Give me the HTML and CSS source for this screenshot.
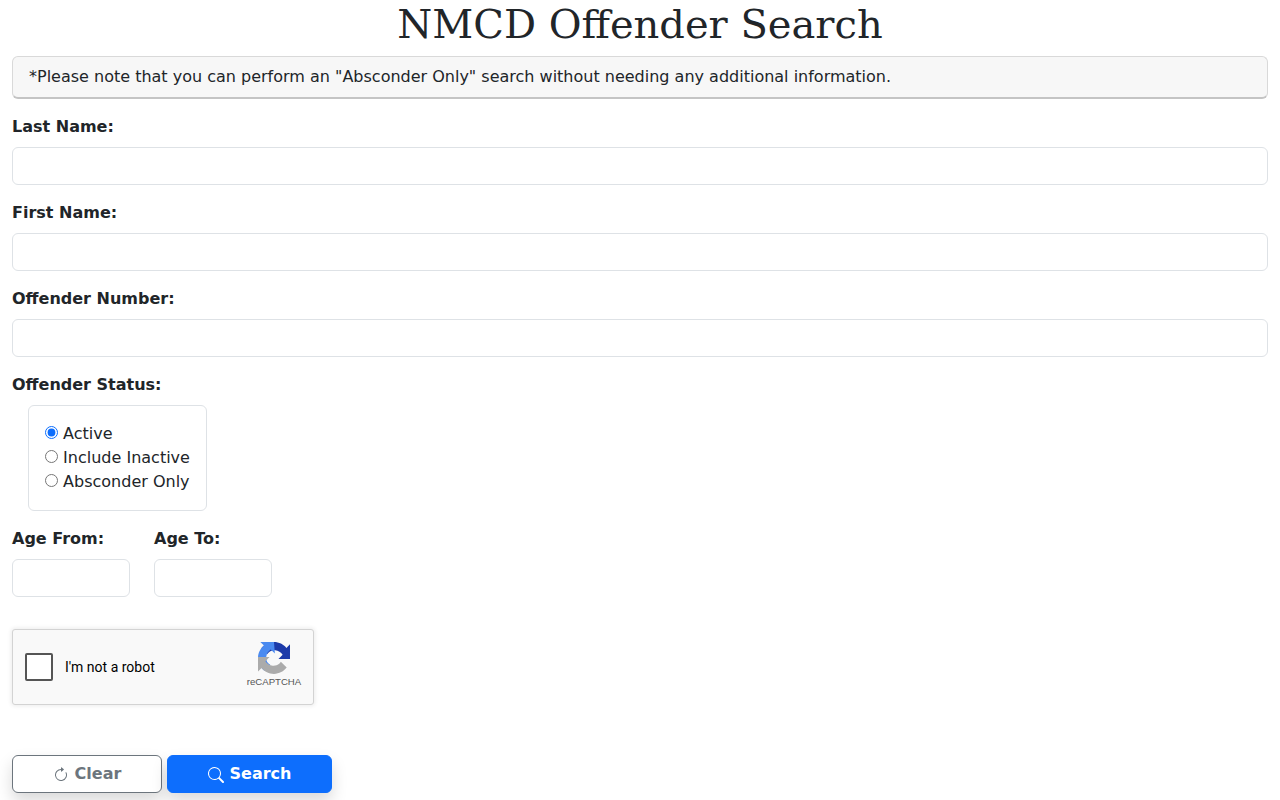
FILE: index.html
```html
<!DOCTYPE html>
<html lang="en">
<head>
    <meta charset="UTF-8">
    <meta name="viewport" content="width=device-width, initial-scale=1.0">
    <title>NMCD Offender Search</title>
    <link rel="stylesheet" href="styles.css">
</head>
<body>
    <main class="page">
        <h1 class="page-title">NMCD Offender Search</h1>
        <div class="note">*Please note that you can perform an "Absconder Only" search without needing any additional information.</div>

        <form class="search-form">
            <div class="field">
                <label class="field-label" for="lastName">Last Name:</label>
                <input class="text-input" id="lastName" type="text">
            </div>
            <div class="field">
                <label class="field-label" for="firstName">First Name:</label>
                <input class="text-input" id="firstName" type="text">
            </div>
            <div class="field">
                <label class="field-label" for="offenderNumber">Offender Number:</label>
                <input class="text-input" id="offenderNumber" type="text">
            </div>

            <div class="field">
                <span class="field-label">Offender Status:</span>
                <div class="status-box">
                    <label class="radio-row"><input type="radio" name="status" checked> Active</label>
                    <label class="radio-row"><input type="radio" name="status"> Include Inactive</label>
                    <label class="radio-row"><input type="radio" name="status"> Absconder Only</label>
                </div>
            </div>

            <div class="age-row">
                <div class="age-field">
                    <label class="field-label" for="ageFrom">Age From:</label>
                    <input class="text-input" id="ageFrom" type="text">
                </div>
                <div class="age-field">
                    <label class="field-label" for="ageTo">Age To:</label>
                    <input class="text-input" id="ageTo" type="text">
                </div>
            </div>

            <!-- Captcha -->
            <div class="captcha">
                <span class="captcha-check"></span>
                <span class="captcha-text">I'm not a robot</span>
                <div class="captcha-brand">
                    <svg class="captcha-logo" viewBox="0 0 64 64" aria-hidden="true">
                        <path fill="#1c3aa9" d="M64 31.955l-.033-1.37V4.687l-7.16 7.16C50.948 4.674 42.033.093 32.05.093c-10.4 0-19.622 4.96-25.458 12.64l11.736 11.86a15.55 15.55 0 0 1 4.754-5.334c2.05-1.6 4.952-2.906 9.968-2.906.606 0 1.074.07 1.417.2 6.216.49 11.604 3.92 14.777 8.897l-8.308 8.308 32.06.003"/>
                        <path fill="#4a8af0" d="M31.955 0l-1.37.033H4.687l7.16 7.16C4.674 13.052.093 21.967.093 31.95c0 10.4 4.96 19.622 12.64 25.458l11.86-11.736a15.55 15.55 0 0 1-5.334-4.754c-1.6-2.05-2.906-4.952-2.906-9.968 0-.606.07-1.074.2-1.417.49-6.216 3.92-11.604 8.897-14.777l8.308 8.308L31.958 0"/>
                        <path fill="#ababab" d="M0 31.955l.033 1.37v25.898l7.16-7.16c5.86 7.173 14.774 11.754 24.757 11.754 10.4 0 19.622-4.96 25.458-12.64l-11.736-11.86a15.55 15.55 0 0 1-4.754 5.334c-2.05 1.6-4.952 2.906-9.968 2.906-.606 0-1.074-.07-1.417-.2-6.216-.49-11.604-3.92-14.777-8.897l8.308-8.308-32.06.003"/>
                    </svg>
                    <span class="captcha-name">reCAPTCHA</span>
                </div>
            </div>

            <div class="actions">
                <button class="btn btn-clear" type="button">
                    <svg class="btn-icon" viewBox="0 0 16 16" fill="currentColor" aria-hidden="true">
                        <path fill-rule="evenodd" d="M8 3a5 5 0 1 0 4.546 2.914.5.5 0 0 1 .908-.417A6 6 0 1 1 8 2v1z"/>
                        <path d="M8 4.466V.534a.25.25 0 0 1 .41-.192l2.36 1.966c.12.1.12.284 0 .384L8.41 4.658A.25.25 0 0 1 8 4.466z"/>
                    </svg>
                    Clear
                </button>
                <button class="btn btn-search" type="button">
                    <svg class="btn-icon" viewBox="0 0 16 16" fill="currentColor" aria-hidden="true">
                        <path d="M11.742 10.344a6.5 6.5 0 1 0-1.397 1.398h-.001c.03.04.062.078.098.115l3.85 3.85a1 1 0 0 0 1.415-1.414l-3.85-3.85a1.007 1.007 0 0 0-.115-.1zM12 6.5a5.5 5.5 0 1 1-11 0 5.5 5.5 0 0 1 11 0z"/>
                    </svg>
                    Search
                </button>
            </div>
        </form>
    </main>
</body>
</html>
```

FILE: styles.css
```css
* {
    margin: 0;
    padding: 0;
    box-sizing: border-box;
}

body {
    font-family: "DejaVu Sans", sans-serif;
    font-size: 16px;
    line-height: 24px;
    color: #212529;
    background: #ffffff;
}

.page {
    min-height: 800px;
    padding: 0 12px;
}

.page-title {
    font-family: "DejaVu Serif", serif;
    font-size: 40px;
    font-weight: 400;
    line-height: 48px;
    text-align: center;
    margin-bottom: 8px;
}

.note {
    height: 43px;
    padding: 8px 16px;
    background: #f7f7f7;
    border: 1px solid #d9d9d9;
    border-bottom: 2px solid #c4c4c4;
    border-radius: 6px;
}

/* Form */
.search-form {
    padding-top: 16px;
}

.field {
    margin-bottom: 16px;
}

.field-label {
    display: block;
    font-weight: 700;
    margin-bottom: 8px;
}

.text-input {
    display: block;
    width: 100%;
    height: 38px;
    padding: 6px 12px;
    font: inherit;
    color: #212529;
    background: #ffffff;
    border: 1px solid #dee2e6;
    border-radius: 6px;
}

.status-box {
    width: 179px;
    height: 106px;
    margin-left: 16px;
    padding: 16px;
    border: 1px solid #dee2e6;
    border-radius: 6px;
}

.radio-row {
    display: block;
    white-space: nowrap;
}

.radio-row input {
    width: 13px;
    height: 13px;
    accent-color: #0d6efd;
}

.age-row {
    display: flex;
    gap: 24px;
    margin-top: 15px;
}

.age-field {
    width: 118px;
}

/* Captcha */
.captcha {
    display: flex;
    align-items: center;
    width: 302px;
    height: 76px;
    margin-top: 32px;
    padding-left: 12px;
    background: #f9f9f9;
    border: 1px solid #d3d3d3;
    border-radius: 3px;
    box-shadow: 0 0 4px 1px rgba(0, 0, 0, 0.08);
}

.captcha-check {
    width: 28px;
    height: 28px;
    background: #ffffff;
    border: 2px solid #555555;
    border-radius: 2px;
}

.captcha-text {
    margin-left: 12px;
    font-family: Roboto, sans-serif;
    font-size: 14px;
    color: #000000;
}

.captcha-brand {
    display: flex;
    flex-direction: column;
    align-items: center;
    width: 56px;
    margin-left: auto;
    margin-right: 11px;
    margin-bottom: 3px;
}

.captcha-logo {
    width: 32px;
    height: 32px;
}

.captcha-name {
    font-family: "Liberation Sans", sans-serif;
    font-size: 9.6px;
    line-height: 16px;
    color: #555555;
}

/* Buttons */
.actions {
    display: flex;
    gap: 5px;
    margin-top: 50px;
}

.btn {
    display: flex;
    align-items: center;
    justify-content: center;
    gap: 6px;
    height: 38px;
    font: inherit;
    font-weight: 700;
    border-radius: 6px;
    box-shadow: 0 8px 16px rgba(0, 0, 0, 0.15);
}

.btn-clear {
    width: 150px;
    color: #6c757d;
    background: #ffffff;
    border: 1px solid #6c757d;
}

.btn-search {
    width: 165px;
    color: #ffffff;
    background: #0d6efd;
    border: 1px solid #0d6efd;
}

.btn-icon {
    width: 16px;
    height: 16px;
    margin-top: 2px;
}
```
